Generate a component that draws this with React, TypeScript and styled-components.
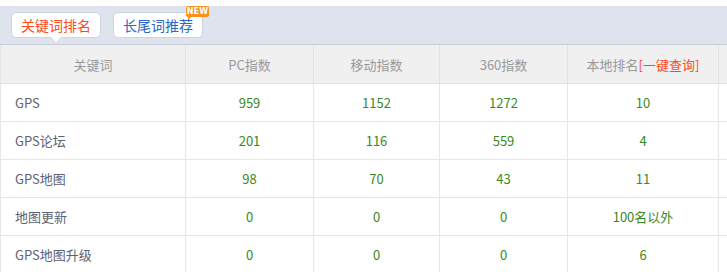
import React from "react";
import styled, { createGlobalStyle } from "styled-components";

const Global = createGlobalStyle`
  html, body { margin: 0; padding: 0; background: #fff; }
  body { font-family: "Noto Sans CJK SC", "Noto Sans", Arial, sans-serif; }
  * { box-sizing: border-box; }
`;

const Page = styled.div`
  width: 727px;
  overflow: hidden;
  padding-top: 6px;
`;

const TabBar = styled.div`
  height: 39px;
  background: #dfe3ed;
  border-bottom: 1px solid #c6cdda;
  display: flex;
  align-items: flex-start;
  gap: 12px;
  padding: 6px 0 0 11px;
`;

const Tab = styled.div<{ $active?: boolean }>`
  position: relative;
  height: 26px;
  padding: 0 9px;
  background: #fff;
  border: 1px solid #cdd3e0;
  border-radius: 5px;
  font-size: 14px;
  line-height: 24px;
  color: ${(p) => (p.$active ? "#ff4a1e" : "#2b67c4")};
  white-space: nowrap;
  &::after {
    content: "";
    display: ${(p) => (p.$active ? "block" : "none")};
    position: absolute;
    left: 50%;
    bottom: -5px;
    margin-left: -5px;
    width: 0;
    height: 0;
    border-left: 5px solid transparent;
    border-right: 5px solid transparent;
    border-top: 5px solid #fff;
  }
`;

const NewBadge = styled.span`
  position: absolute;
  top: -7px;
  right: -7px;
  width: 23px;
  height: 11px;
  background: #f7931e;
  border-radius: 2px;
  color: #fff;
  font-family: "DejaVu Sans", Arial, sans-serif;
  font-weight: bold;
  font-size: 8px;
  line-height: 11px;
  text-align: center;
  letter-spacing: 0.2px;
  &::after {
    content: "";
    position: absolute;
    left: 2px;
    bottom: -3px;
    border-left: 3px solid #f7931e;
    border-bottom: 3px solid transparent;
  }
`;

const Table = styled.div`
  display: grid;
  grid-template-columns: 185px 128px 126px 128px 151px 20px;
  width: 738px;
  border-left: 1px solid #e6e6e6;
`;

const HeadCell = styled.div`
  height: 39px;
  background: #f0f0f0;
  border-right: 1px solid #e2e2e2;
  border-bottom: 1px solid #e2e2e2;
  color: #999;
  font-size: 13px;
  display: flex;
  align-items: center;
  justify-content: center;
  white-space: nowrap;
`;

const Query = styled.span`
  color: #ff4a1e;
`;

const Cell = styled.div<{ $left?: boolean }>`
  height: 38px;
  border-right: 1px solid #e6e6e6;
  border-bottom: 1px solid #e6e6e6;
  font-size: 13px;
  display: flex;
  align-items: center;
  justify-content: ${(p) => (p.$left ? "flex-start" : "center")};
  padding-left: ${(p) => (p.$left ? "14px" : "0")};
  color: ${(p) => (p.$left ? "#5c6272" : "#3a8a24")};
  white-space: nowrap;
`;

const rows: [string, string, string, string, string][] = [
  ["GPS", "959", "1152", "1272", "10"],
  ["GPS论坛", "201", "116", "559", "4"],
  ["GPS地图", "98", "70", "43", "11"],
  ["地图更新", "0", "0", "0", "100名以外"],
  ["GPS地图升级", "0", "0", "0", "6"],
];

export default function App() {
  return (
    <Page>
      <Global />
      <TabBar>
        <Tab $active>关键词排名</Tab>
        <Tab>
          长尾词推荐
          <NewBadge>NEW</NewBadge>
        </Tab>
      </TabBar>
      <Table>
        <HeadCell>关键词</HeadCell>
        <HeadCell>PC指数</HeadCell>
        <HeadCell>移动指数</HeadCell>
        <HeadCell>360指数</HeadCell>
        <HeadCell>
          本地排名<Query>[一键查询]</Query>
        </HeadCell>
        <HeadCell />
        {rows.map((r) => (
          <React.Fragment key={r[0]}>
            <Cell $left>{r[0]}</Cell>
            <Cell>{r[1]}</Cell>
            <Cell>{r[2]}</Cell>
            <Cell>{r[3]}</Cell>
            <Cell>{r[4]}</Cell>
            <Cell />
          </React.Fragment>
        ))}
      </Table>
    </Page>
  );
}
